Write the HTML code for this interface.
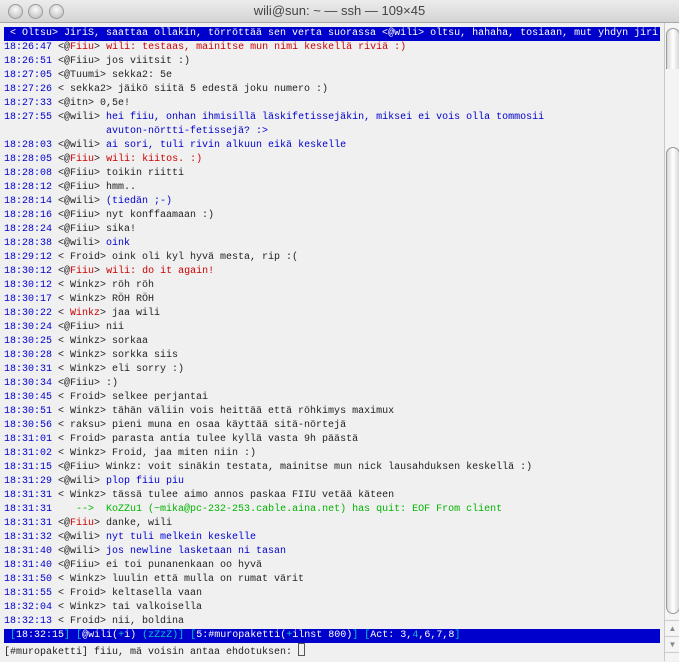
<!DOCTYPE html>
<html><head><meta charset="utf-8"><style>
body{margin:0;width:679px;height:661px;overflow:hidden;background:#f0f0f0;position:relative;font-family:"Liberation Sans",sans-serif}
.title{position:absolute;left:0;top:0;width:679px;height:22px;background:linear-gradient(#ececec,#d4d4d4);border-bottom:1px solid #a8a8a8;text-align:center;font-size:13px;line-height:22px;color:#444}
.btn{position:absolute;top:4px;width:13px;height:13px;border-radius:50%;background:radial-gradient(circle at 50% 35%,#fafafa,#b8b8b8);border:1px solid #9a9a9a}
pre{position:absolute;left:4px;top:27px;margin:0;font-family:"Liberation Mono",monospace;font-size:10px;line-height:14px;color:#222;white-space:pre}
.hl{background:#0000cc;color:#fff;display:inline-block;width:656px}
.b{color:#0000cc}.r{color:#cc0000}.g{color:#00b400}.c{color:#00c8c8}.w{color:#fff}
.sb{position:absolute;left:664px;top:23px;width:15px;height:638px;background:#f4f4f4;border-left:1px solid #c8c8c8}
.thumb{position:absolute;left:1px;width:12px;border:1px solid #999;border-radius:7px;background:linear-gradient(90deg,#d8d8d8,#fff,#d8d8d8)}
</style></head><body>
<div class="title">wili@sun: ~ — ssh — 109×45</div>
<div class="btn" style="left:8px"></div><div class="btn" style="left:28px"></div><div class="btn" style="left:49px"></div>
<pre><span class="hl"> &lt; Oltsu&gt; JiriS, saattaa ollakin, törröttää sen verta suorassa &lt;@wili&gt; oltsu, hahaha, tosiaan, mut yhdyn jiri</span>
<span class="b">18:26:47</span> &lt;@<span class="r">Fiiu</span>&gt; <span class="r">wili: testaas, mainitse mun nimi keskellä riviä :)</span>
<span class="b">18:26:51</span> &lt;@Fiiu&gt; jos viitsit :)
<span class="b">18:27:05</span> &lt;@Tuumi&gt; sekka2: 5e
<span class="b">18:27:26</span> &lt; sekka2&gt; jäikö siitä 5 edestä joku numero :)
<span class="b">18:27:33</span> &lt;@itn&gt; 0,5e!
<span class="b">18:27:55</span> &lt;@wili&gt; <span class="b">hei fiiu, onhan ihmisillä läskifetissejäkin, miksei ei vois olla tommosii</span>
<span class="b">                 avuton-nörtti-fetissejä? :&gt;</span>
<span class="b">18:28:03</span> &lt;@wili&gt; <span class="b">ai sori, tuli rivin alkuun eikä keskelle</span>
<span class="b">18:28:05</span> &lt;@<span class="r">Fiiu</span>&gt; <span class="r">wili: kiitos. :)</span>
<span class="b">18:28:08</span> &lt;@Fiiu&gt; toikin riitti
<span class="b">18:28:12</span> &lt;@Fiiu&gt; hmm..
<span class="b">18:28:14</span> &lt;@wili&gt; <span class="b">(tiedän ;-)</span>
<span class="b">18:28:16</span> &lt;@Fiiu&gt; nyt konffaamaan :)
<span class="b">18:28:24</span> &lt;@Fiiu&gt; sika!
<span class="b">18:28:38</span> &lt;@wili&gt; <span class="b">oink</span>
<span class="b">18:29:12</span> &lt; Froid&gt; oink oli kyl hyvä mesta, rip :(
<span class="b">18:30:12</span> &lt;@<span class="r">Fiiu</span>&gt; <span class="r">wili: do it again!</span>
<span class="b">18:30:12</span> &lt; Winkz&gt; röh röh
<span class="b">18:30:17</span> &lt; Winkz&gt; RÖH RÖH
<span class="b">18:30:22</span> &lt; <span class="r">Winkz</span>&gt; jaa wili
<span class="b">18:30:24</span> &lt;@Fiiu&gt; nii
<span class="b">18:30:25</span> &lt; Winkz&gt; sorkaa
<span class="b">18:30:28</span> &lt; Winkz&gt; sorkka siis
<span class="b">18:30:31</span> &lt; Winkz&gt; eli sorry :)
<span class="b">18:30:34</span> &lt;@Fiiu&gt; :)
<span class="b">18:30:45</span> &lt; Froid&gt; selkee perjantai
<span class="b">18:30:51</span> &lt; Winkz&gt; tähän väliin vois heittää että röhkimys maximux
<span class="b">18:30:56</span> &lt; raksu&gt; pieni muna en osaa käyttää sitä-nörtejä
<span class="b">18:31:01</span> &lt; Froid&gt; parasta antia tulee kyllä vasta 9h päästä
<span class="b">18:31:02</span> &lt; Winkz&gt; Froid, jaa miten niin :)
<span class="b">18:31:15</span> &lt;@Fiiu&gt; Winkz: voit sinäkin testata, mainitse mun nick lausahduksen keskellä :)
<span class="b">18:31:29</span> &lt;@wili&gt; <span class="b">plop fiiu piu</span>
<span class="b">18:31:31</span> &lt; Winkz&gt; tässä tulee aimo annos paskaa FIIU vetää käteen
<span class="b">18:31:31</span> <span class="g">   --&gt;  KoZZu1 (~mika@pc-232-253.cable.aina.net) has quit: EOF From client</span>
<span class="b">18:31:31</span> &lt;@<span class="r">Fiiu</span>&gt; danke, wili
<span class="b">18:31:32</span> &lt;@wili&gt; <span class="b">nyt tuli melkein keskelle</span>
<span class="b">18:31:40</span> &lt;@wili&gt; <span class="b">jos newline lasketaan ni tasan</span>
<span class="b">18:31:40</span> &lt;@Fiiu&gt; ei toi punanenkaan oo hyvä
<span class="b">18:31:50</span> &lt; Winkz&gt; luulin että mulla on rumat värit
<span class="b">18:31:55</span> &lt; Froid&gt; keltasella vaan
<span class="b">18:32:04</span> &lt; Winkz&gt; tai valkoisella
<span class="b">18:32:13</span> &lt; Froid&gt; nii, boldina
<span class="hl"> <span class="c">[</span>18:32:15<span class="c">]</span> <span class="c">[</span>@wili(<span class="c">+</span>i) <span class="c">(zZzZ)</span><span class="c">]</span> <span class="c">[</span>5:#muropaketti(<span class="c">+</span>ilnst 800)<span class="c">]</span> <span class="c">[</span>Act: 3,<span class="c">4</span>,6,7,8<span class="c">]</span></span>
[#muropaketti] fiiu, mä voisin antaa ehdotuksen: <span style="display:inline-block;width:5px;height:11px;border:1px solid #555;vertical-align:-2px"></span></pre>
<div class="sb">
<div class="thumb" style="top:5px;height:40px;border-bottom:none;border-radius:7px 7px 0 0"></div>
<div class="thumb" style="top:124px;height:465px"></div>
<div style="position:absolute;top:597px;left:0;width:15px;height:16px;border-top:1px solid #ccc;font-size:8px;color:#888;text-align:center;line-height:16px">▲</div>
<div style="position:absolute;top:613px;left:0;width:15px;height:16px;border-top:1px solid #ccc;font-size:8px;color:#888;text-align:center;line-height:16px">▼</div>
<div style="position:absolute;top:629px;left:0;width:15px;height:9px;border-top:1px solid #ccc"></div>
</div>
</body></html>
